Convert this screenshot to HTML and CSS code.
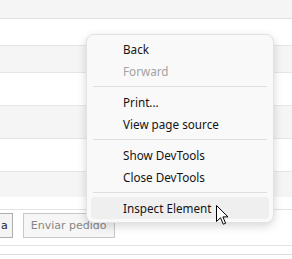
FILE: index.html
```html
<html>
<head>
    <title>Pedido</title>
    <link rel="stylesheet" href="styles.css">
</head>
<body>
    <div class="page">
        <div class="row rowGray rowTop"></div>
        <div class="row rowShort"></div>
        <div class="row rowGray rowShort"></div>
        <div class="row rowTall"></div>
        <div class="row rowGray rowTall"></div>
        <div class="row rowTall"></div>
        <div class="row rowGray rowLast"></div>
        <div class="rowGap"></div>

        <div class="actions">
            <button class="myButton cutButton">a</button>
            <button class="myButton" disabled>Enviar pedido</button>
        </div>
        <div class="foot"></div>

        <!-- context menu over the page -->
        <div class="menu">
            <div class="menuItem">Back</div>
            <div class="menuItem menuOff">Forward</div>
            <div class="menuSep"></div>
            <div class="menuItem">Print...</div>
            <div class="menuItem">View page source</div>
            <div class="menuSep"></div>
            <div class="menuItem">Show DevTools</div>
            <div class="menuItem">Close DevTools</div>
            <div class="menuSep"></div>
            <div class="menuItem menuHover">Inspect Element</div>
        </div>

        <svg class="cursor" width="13" height="20" viewBox="0 0 13 20">
            <path d="M0.5 0.5 L0.5 16.5 L4.5 12.8 L7.3 19.2 L9.6 18.2 L6.9 11.9 L12 11.9 Z"
                  fill="#fff" stroke="#000" stroke-width="1" stroke-linejoin="round"/>
        </svg>
    </div>
</body>
</html>
```

FILE: styles.css
```css
body {
    margin: 0px;
    background-color: #ffffff;
    overflow: hidden;
}

.page {
    position: relative;
    width: 292px;
    height: 259px;
    display: flex;
    flex-direction: column;
}

.row {
    background-color: #ffffff;
    border-bottom: 1px solid #e6e6e6;
}

.rowGray {
    background-color: #f5f5f5;
}

.rowTop {
    height: 18px;
    border-bottom-color: #e0e0e0;
}

.rowShort {
    height: 26px;
}

.rowTall {
    height: 32px;
}

.rowLast {
    height: 25px;
    border-bottom: none;
}

.rowGap {
    height: 12px;
    border-bottom: 1px solid #e3e3e3;
}

.actions {
    display: flex;
    gap: 10px;
    padding-top: 3px;
    height: 32px;
    border-bottom: 1px solid #e3e3e3;
}

.foot {
    height: 8px;
    border-bottom: 1px solid #dcdcdc;
}

.myButton {
    height: 25px;
    padding: 0px 7px;
    font-family: "DejaVu Sans", sans-serif;
    font-size: 11px;
    color: #1a1a1a;
    background-color: #f4f4f4;
    border: 1px solid #adadad;
    border-radius: 0px;
}

.myButton:disabled {
    color: #868686;
    border-color: #c8c8c8;
    background-color: #f6f6f6;
}

.cutButton {
    border-left: none;
    padding: 0px 4px 0px 1px;
    color: #222222;
}

/* context menu */

.menu {
    position: absolute;
    left: 86px;
    top: 34px;
    width: 188px;
    box-sizing: border-box;
    padding: 3px 4px 3px 4px;
    background-color: #f9f9f9;
    border: 1px solid #e2e2e2;
    border-radius: 8px;
    box-shadow: 0px 3px 10px rgba(0, 0, 0, 0.16);
    font-family: "Noto Sans", sans-serif;
    font-size: 11.7px;
    color: #141414;
}

.menuItem {
    height: 22px;
    line-height: 22px;
    padding-left: 32px;
    border-radius: 4px;
}

.menuOff {
    color: #a2a2a2;
}

.menuHover {
    background-color: #efefef;
}

.menuSep {
    height: 1px;
    margin: 4px 2px 4px 2px;
    background-color: #dedede;
}

.cursor {
    position: absolute;
    left: 216px;
    top: 205px;
}
```
